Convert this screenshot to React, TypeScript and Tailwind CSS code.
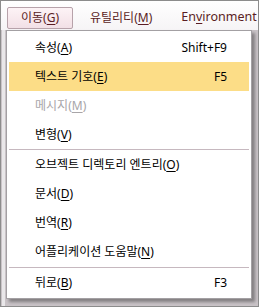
import React from "react";

const font = { fontFamily: '"Noto Sans", "Noto Sans CJK KR", sans-serif' };

function M({ c }: { c: string }) {
  return <span className="underline underline-offset-2">{c}</span>;
}

type Item = { label: string; key: string; shortcut?: string; disabled?: boolean; active?: boolean } | "sep";

const items: Item[] = [
  { label: "속성", key: "A", shortcut: "Shift+F9" },
  { label: "텍스트 기호", key: "E", shortcut: "F5", active: true },
  { label: "메시지", key: "M", disabled: true },
  { label: "변형", key: "V" },
  "sep",
  { label: "오브젝트 디렉토리 엔트리", key: "O" },
  { label: "문서", key: "D" },
  { label: "번역", key: "R" },
  { label: "어플리케이션 도움말", key: "N" },
  "sep",
  { label: "뒤로", key: "B", shortcut: "F3" },
];

export default function App() {
  return (
    <div
      className="relative w-[259px] h-[307px] overflow-hidden border border-[#8c8c8c] bg-[#c9c3c7] text-[12px]"
      style={font}
    >
      <div className="h-[29px] bg-gradient-to-b from-white to-[#f6f4f6] flex items-center pl-[6px] text-[#5a1d24]">
        <div className="h-[22px] w-[66px] flex items-center justify-center rounded-[2px] border border-[#b7a2aa] bg-gradient-to-b from-[#fdf3f6] to-[#f2e0e6] mt-[4px]">
          이동(<M c="G" />)
        </div>
        <div className="ml-[17px] mt-[4px]">
          유틸리티(<M c="M" />)
        </div>
        <div className="ml-[29px] mt-[4px] text-[12.5px]">
          En<M c="v" />ironment
        </div>
      </div>
      <div className="h-full border-l-[3px] border-[#e9e7e9] ml-[1px]"></div>
      <div className="absolute left-[5px] top-[29px] w-[246px] h-[269px] bg-white border border-[#a3a0a3] shadow-[3px_3px_3px_rgba(0,0,0,0.35)] px-[2px] pt-[2px] flex flex-col text-black">
        {items.map((it, i) =>
          it === "sep" ? (
            <div key={i} className={`h-px bg-[#c6b8bf] shrink-0 ${i > 5 ? "mt-[1px] mb-[1px]" : ""}`} />
          ) : (
            <div
              key={i}
              className={`${i === 10 ? "h-[27px]" : "h-[29px]"} shrink-0 flex items-center justify-between pl-[26px] pr-[22px] ${
                it.active ? "bg-[#fcdd87]" : ""
              } ${it.disabled ? "text-[#a8a5a8]" : ""}`}
            >
              <span>
                {it.label}(<M c={it.key} />)
              </span>
              {it.shortcut && <span>{it.shortcut}</span>}
            </div>
          )
        )}
      </div>
    </div>
  );
}
